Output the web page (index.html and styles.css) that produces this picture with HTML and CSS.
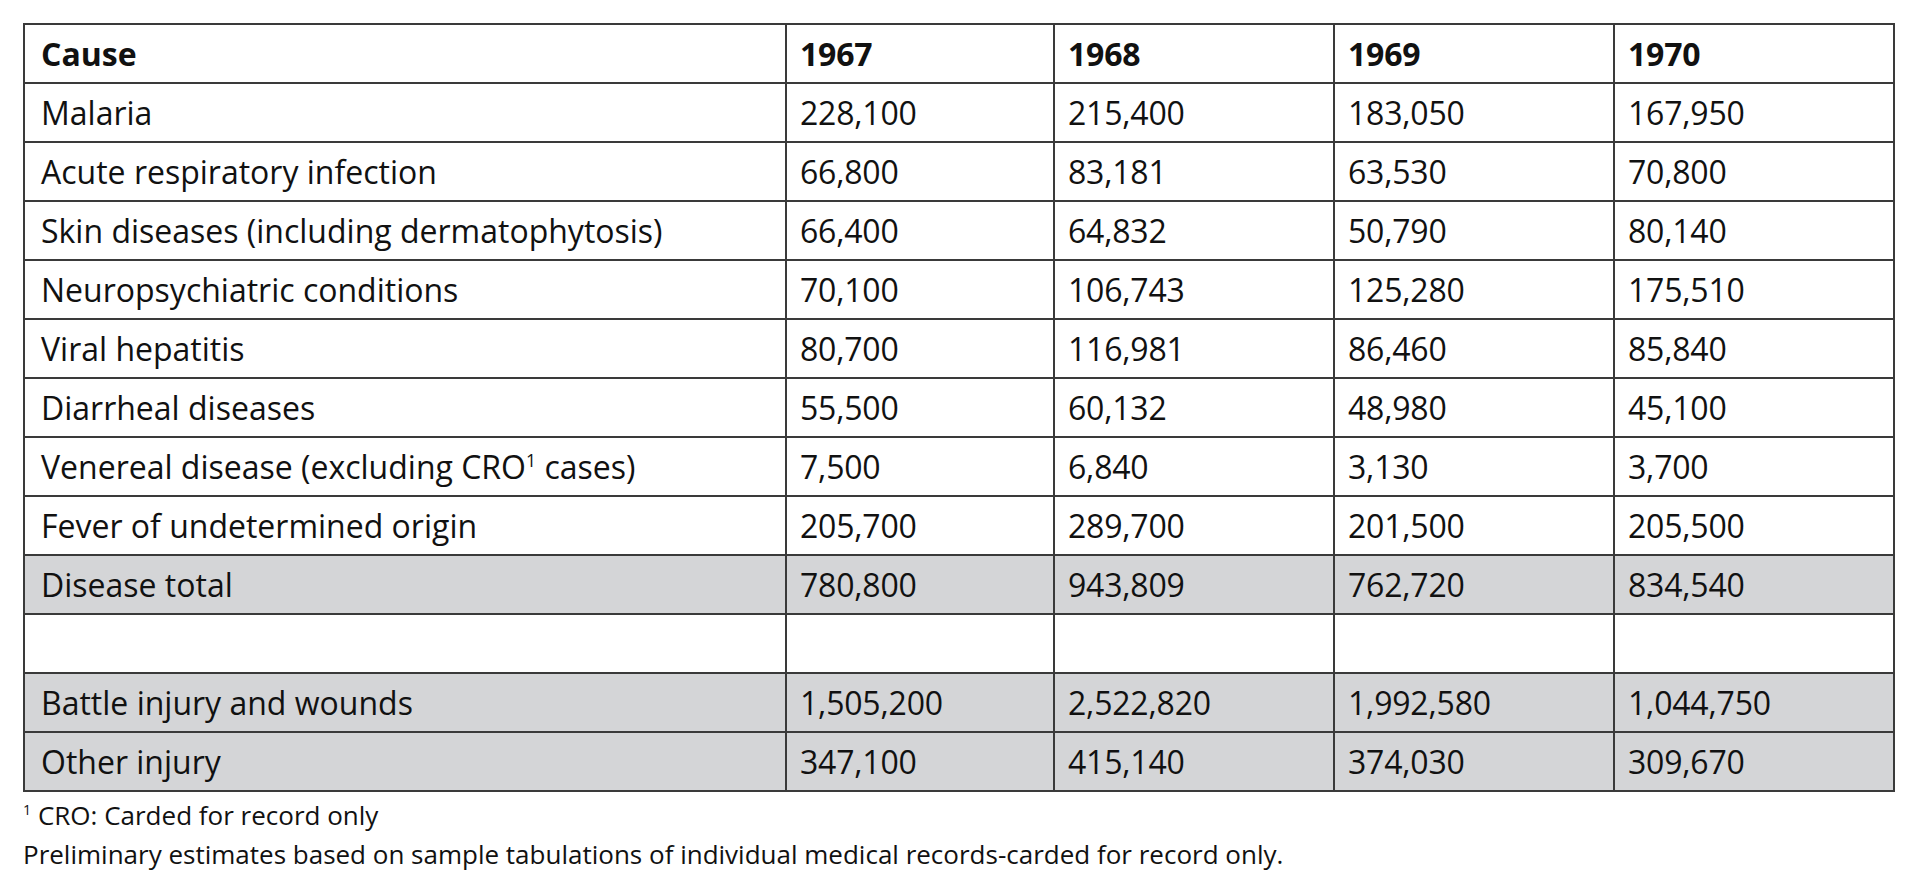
FILE: index.html
```html
<!DOCTYPE html>
<html>
<head>
<meta charset="utf-8">
<link rel="stylesheet" href="styles.css">
</head>
<body>
<div class="page">
  <table class="data">
    <colgroup>
      <col class="c-cause">
      <col class="c-first">
      <col class="c-year">
      <col class="c-year">
      <col class="c-year">
    </colgroup>
    <thead>
      <tr class="head"><th>Cause</th><th class="num">1967</th><th class="num">1968</th><th class="num">1969</th><th class="num">1970</th></tr>
    </thead>
    <tbody>
      <tr><td>Malaria</td><td class="num">228,100</td><td class="num">215,400</td><td class="num">183,050</td><td class="num">167,950</td></tr>
      <tr><td>Acute respiratory infection</td><td class="num">66,800</td><td class="num">83,181</td><td class="num">63,530</td><td class="num">70,800</td></tr>
      <tr><td>Skin diseases (including dermatophytosis)</td><td class="num">66,400</td><td class="num">64,832</td><td class="num">50,790</td><td class="num">80,140</td></tr>
      <tr><td>Neuropsychiatric conditions</td><td class="num">70,100</td><td class="num">106,743</td><td class="num">125,280</td><td class="num">175,510</td></tr>
      <tr><td>Viral hepatitis</td><td class="num">80,700</td><td class="num">116,981</td><td class="num">86,460</td><td class="num">85,840</td></tr>
      <tr><td>Diarrheal diseases</td><td class="num">55,500</td><td class="num">60,132</td><td class="num">48,980</td><td class="num">45,100</td></tr>
      <tr><td>Venereal disease (excluding CRO<sup class="sup">1</sup> cases)</td><td class="num">7,500</td><td class="num">6,840</td><td class="num">3,130</td><td class="num">3,700</td></tr>
      <tr><td>Fever of undetermined origin</td><td class="num">205,700</td><td class="num">289,700</td><td class="num">201,500</td><td class="num">205,500</td></tr>
      <tr class="shaded"><td>Disease total</td><td class="num">780,800</td><td class="num">943,809</td><td class="num">762,720</td><td class="num">834,540</td></tr>
      <tr><td></td><td class="num"></td><td class="num"></td><td class="num"></td><td class="num"></td></tr>
      <tr class="shaded"><td>Battle injury and wounds</td><td class="num">1,505,200</td><td class="num">2,522,820</td><td class="num">1,992,580</td><td class="num">1,044,750</td></tr>
      <tr class="shaded"><td>Other injury</td><td class="num">347,100</td><td class="num">415,140</td><td class="num">374,030</td><td class="num">309,670</td></tr>
    </tbody>
  </table>
  <div class="notes">
    <p><sup class="sup">1</sup> CRO: Carded for record only</p>
    <p>Preliminary estimates based on sample tabulations of individual medical records-carded for record only.</p>
  </div>
</div>
</body>
</html>
```

FILE: styles.css
```css
html, body {
  margin: 0;
  padding: 0;
  background: #ffffff;
}
.page {
  padding: 23px 0 0 23px;
  font-family: "Open Sans", "Liberation Sans", sans-serif;
  color: #111;
}
.data {
  border-collapse: collapse;
  table-layout: fixed;
  width: 1870px;
  font-size: 32px;
}
.c-cause { width: 762px; }
.c-first { width: 268px; }
.c-year { width: 280px; }
.data th, .data td {
  border: 2px solid #3a3a3a;
  height: 59px;
  padding: 0 0 0 16px;
  text-align: left;
  vertical-align: middle;
  white-space: nowrap;
  box-sizing: border-box;
}
.data .num {
  padding-left: 13px;
  letter-spacing: -0.2px;
}
.data th {
  font-weight: 700;
}
.data td {
  font-weight: 400;
}
.shaded td {
  background: #d4d5d7;
}
.sup {
  font-size: 0.55em;
  vertical-align: 0.7em;
  line-height: 0;
}
.notes {
  padding-top: 4px;
  font-size: 26px;
  line-height: 39px;
}
.notes p {
  margin: 0;
}
```
